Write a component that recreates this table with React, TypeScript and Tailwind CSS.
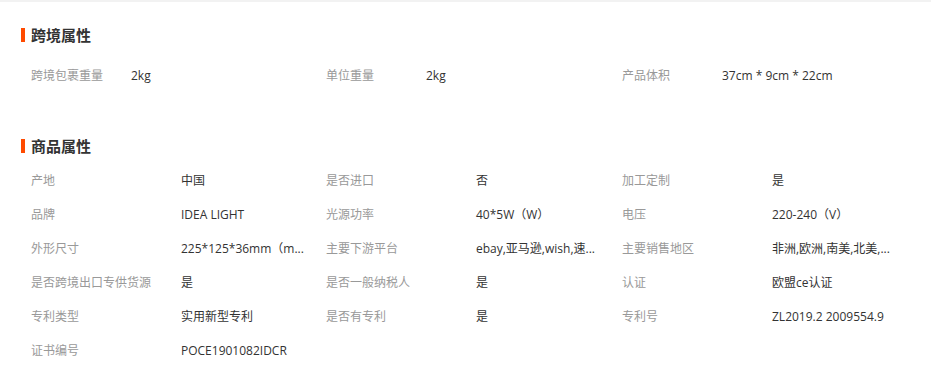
import React from "react";

const font = { fontFamily: '"Open Sans", "Noto Sans CJK SC", sans-serif' };

const cross = [
  ["跨境包裹重量", "2kg"],
  ["单位重量", "2kg"],
  ["产品体积", "37cm * 9cm * 22cm"],
];

const attrs: [string, string][] = [
  ["产地", "中国"],
  ["是否进口", "否"],
  ["加工定制", "是"],
  ["品牌", "IDEA LIGHT"],
  ["光源功率", "40*5W（W）"],
  ["电压", "220-240（V）"],
  ["外形尺寸", "225*125*36mm（m..."],
  ["主要下游平台", "ebay,亚马逊,wish,速..."],
  ["主要销售地区", "非洲,欧洲,南美,北美,..."],
  ["是否跨境出口专供货源", "是"],
  ["是否一般纳税人", "是"],
  ["认证", "欧盟ce认证"],
  ["专利类型", "实用新型专利"],
  ["是否有专利", "是"],
  ["专利号", "ZL2019.2 2009554.9"],
  ["证书编号", "POCE1901082IDCR"],
];

function Heading({ text }: { text: string }) {
  return (
    <div className="flex items-center h-[20px]">
      <div className="w-[4px] h-[14px] bg-[#ff4a00] mr-[6px]" />
      <span
        className="text-[15px] font-bold text-[#333] leading-[20px]"
        style={{ fontFamily: '"Noto Sans CJK SC", sans-serif' }}
      >
        {text}
      </span>
    </div>
  );
}

export default function App() {
  return (
    <div className="w-[931px] h-[380px] bg-white overflow-hidden text-[12px]" style={font}>
      <div className="h-[2px] bg-[#f2f2f2]" />
      <div className="pl-[21px]">
        <div className="mt-[23px]">
          <Heading text="跨境属性" />
        </div>
        <div className="mt-[14px] pl-[10px] grid grid-cols-[295px_296px_1fr]">
          {cross.map(([l, v]) => (
            <div key={l} className="flex items-center h-[34px]">
              <span className="w-[100px] text-[#999]">{l}</span>
              <span className="text-[#333]">{v}</span>
            </div>
          ))}
        </div>
        <div className="mt-[43px]">
          <Heading text="商品属性" />
        </div>
        <div className="mt-[8px] pl-[10px] grid grid-cols-[295px_296px_1fr]">
          {attrs.map(([l, v]) => (
            <div key={l} className="flex items-center h-[34px]">
              <span className="w-[150px] text-[#999] whitespace-nowrap">{l}</span>
              <span className="text-[#333] whitespace-nowrap">{v}</span>
            </div>
          ))}
        </div>
      </div>
    </div>
  );
}
